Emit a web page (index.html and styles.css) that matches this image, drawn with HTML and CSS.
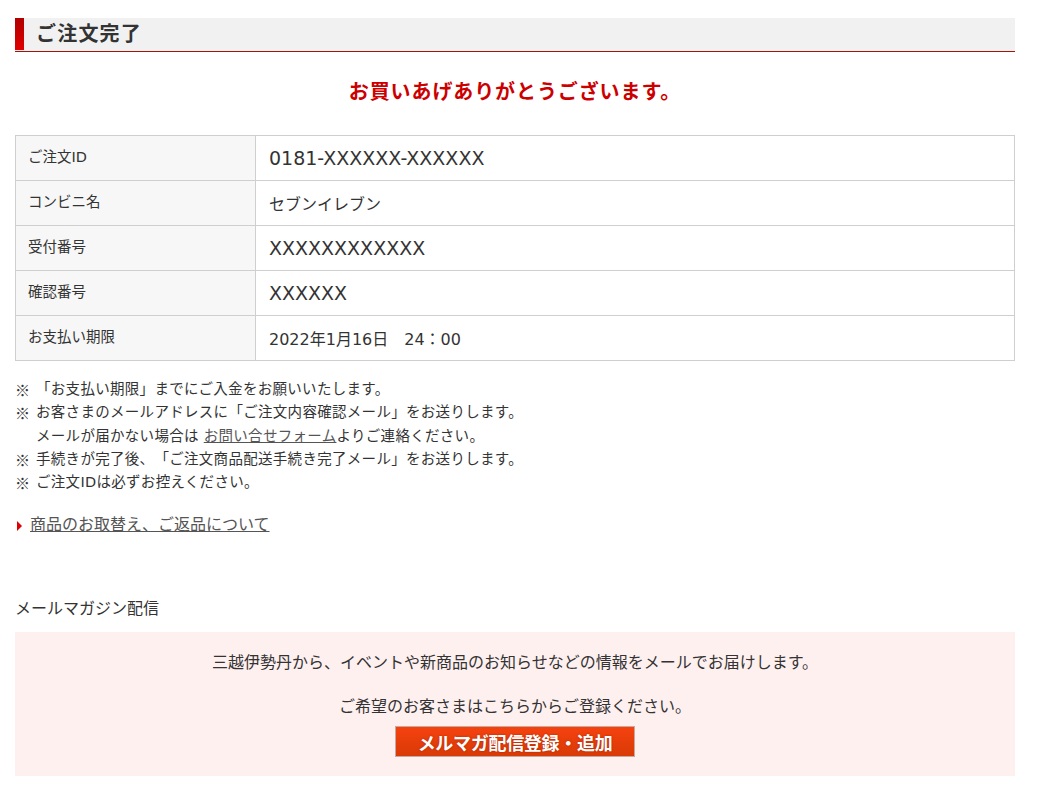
FILE: index.html
```html
<!DOCTYPE html>
<html lang="ja">
<head>
<meta charset="utf-8">
<title>ご注文完了</title>
<link rel="stylesheet" href="styles.css">
</head>
<body>
<div class="page">
  <h1 class="page-title">ご注文完了</h1>
  <p class="thanks">お買いあげありがとうございます。</p>

  <table class="order-table">
    <tr><th>ご注文ID</th><td class="v-lg">0181-XXXXXX-XXXXXX</td></tr>
    <tr><th>コンビニ名</th><td>セブンイレブン</td></tr>
    <tr><th>受付番号</th><td class="v-lg">XXXXXXXXXXXX</td></tr>
    <tr><th>確認番号</th><td class="v-lg">XXXXXX</td></tr>
    <tr><th>お支払い期限</th><td>2022年1月16日　24：00</td></tr>
  </table>

  <ul class="notes">
    <li><span class="mark">※</span><span class="txt">「お支払い期限」までにご入金をお願いいたします。</span></li>
    <li><span class="mark">※</span><span class="txt">お客さまのメールアドレスに「ご注文内容確認メール」をお送りします。<br>メールが届かない場合は <a href="#" class="ulink">お問い合せフォーム</a>よりご連絡ください。</span></li>
    <li><span class="mark">※</span><span class="txt">手続きが完了後、「ご注文商品配送手続き完了メール」をお送りします。</span></li>
    <li><span class="mark">※</span><span class="txt">ご注文IDは必ずお控えください。</span></li>
  </ul>

  <p class="arrow-link"><span class="tri"></span><a href="#" class="ulink">商品のお取替え、ご返品について</a></p>

  <h2 class="mm-title">メールマガジン配信</h2>
  <div class="mm-box">
    <p class="mm-text">三越伊勢丹から、イベントや新商品のお知らせなどの情報をメールでお届けします。</p>
    <p class="mm-text mm-text2">ご希望のお客さまはこちらからご登録ください。</p>
    <a href="#" class="mm-button">メルマガ配信登録・追加</a>
  </div>
</div>
</body>
</html>
```

FILE: styles.css
```css
* { box-sizing: border-box; }
body {
  margin: 0;
  background: #fff;
  color: #333;
  font-family: "DejaVu Sans", "Noto Sans CJK JP", sans-serif;
  text-spacing-trim: space-all;
}
.page {
  width: 1000px;
  margin: 18px 0 0 15px;
}
.page-title {
  margin: 0;
  height: 34px;
  line-height: 32px;
  font-size: 20px;
  font-weight: bold;
  letter-spacing: 1.2px;
  color: #333;
  background: #f1f1f1;
  border-bottom: 1px solid #a3140c;
  padding-left: 21px;
  position: relative;
}
.page-title::before {
  content: "";
  position: absolute;
  left: 0;
  top: 0;
  width: 9px;
  height: 32px;
  background: linear-gradient(#b00000, #e00000);
}
.thanks {
  margin: 27px 0 0;
  text-align: center;
  color: #cc0000;
  font-size: 20px;
  letter-spacing: 0.9px;
  font-weight: bold;
  line-height: 26px;
}
.order-table {
  margin-top: 30px;
  width: 100%;
  border-collapse: collapse;
}
.order-table th,
.order-table td {
  border: 1px solid #cfcfcf;
  height: 45px;
  padding: 0 13px;
  text-align: left;
  vertical-align: middle;
}
.order-table th {
  width: 240px;
  background: #f7f7f7;
  font-weight: normal;
  font-size: 14.5px;
  color: #333;
  padding-bottom: 6px;
  padding-left: 12px;
}
.order-table td {
  font-size: 16px;
  color: #333;
}
.order-table td.v-lg {
  font-size: 19px;
}
.notes {
  list-style: none;
  margin: 17px 0 0;
  padding: 0;
  font-size: 14.5px;
  letter-spacing: 0.3px;
  line-height: 23.3px;
}
.notes li {
  display: flex;
}
.notes .mark {
  flex: none;
  width: 21px;
  padding-left: 0;
  font-family: "Noto Sans CJK JP", sans-serif;
  font-size: 15px;
}
.ulink {
  color: #555;
  text-decoration: underline;
}
.arrow-link {
  margin: 19px 0 0;
  font-size: 16px;
  line-height: 24px;
  display: flex;
  align-items: center;
}
.arrow-link .tri {
  width: 0;
  height: 0;
  border-top: 5px solid transparent;
  border-bottom: 5px solid transparent;
  border-left: 5px solid #e00000;
  margin: 2px 8px 0 2px;
}
.mm-title {
  margin: 60px 0 0;
  font-size: 16px;
  font-weight: normal;
  line-height: 24px;
}
.mm-box {
  margin-top: 11px;
  background: #fff0f0;
  padding: 19px 0 19px;
  display: flex;
  flex-direction: column;
  align-items: center;
}
.mm-text {
  margin: 0;
  font-size: 16px;
  line-height: 24px;
}
.mm-text2 {
  margin-top: 20px;
}
.mm-button {
  margin-top: 7px;
  width: 240px;
  height: 31px;
  display: flex;
  align-items: center;
  justify-content: center;
  background: linear-gradient(#f5420f, #d83a06);
  border: 1px solid #c8a9a0;
  color: #fff;
  font-size: 18px;
  font-weight: bold;
  letter-spacing: -0.3px;
  text-decoration: none;
  text-shadow: 0 0 2px rgba(120, 20, 0, 0.6);
}
```
